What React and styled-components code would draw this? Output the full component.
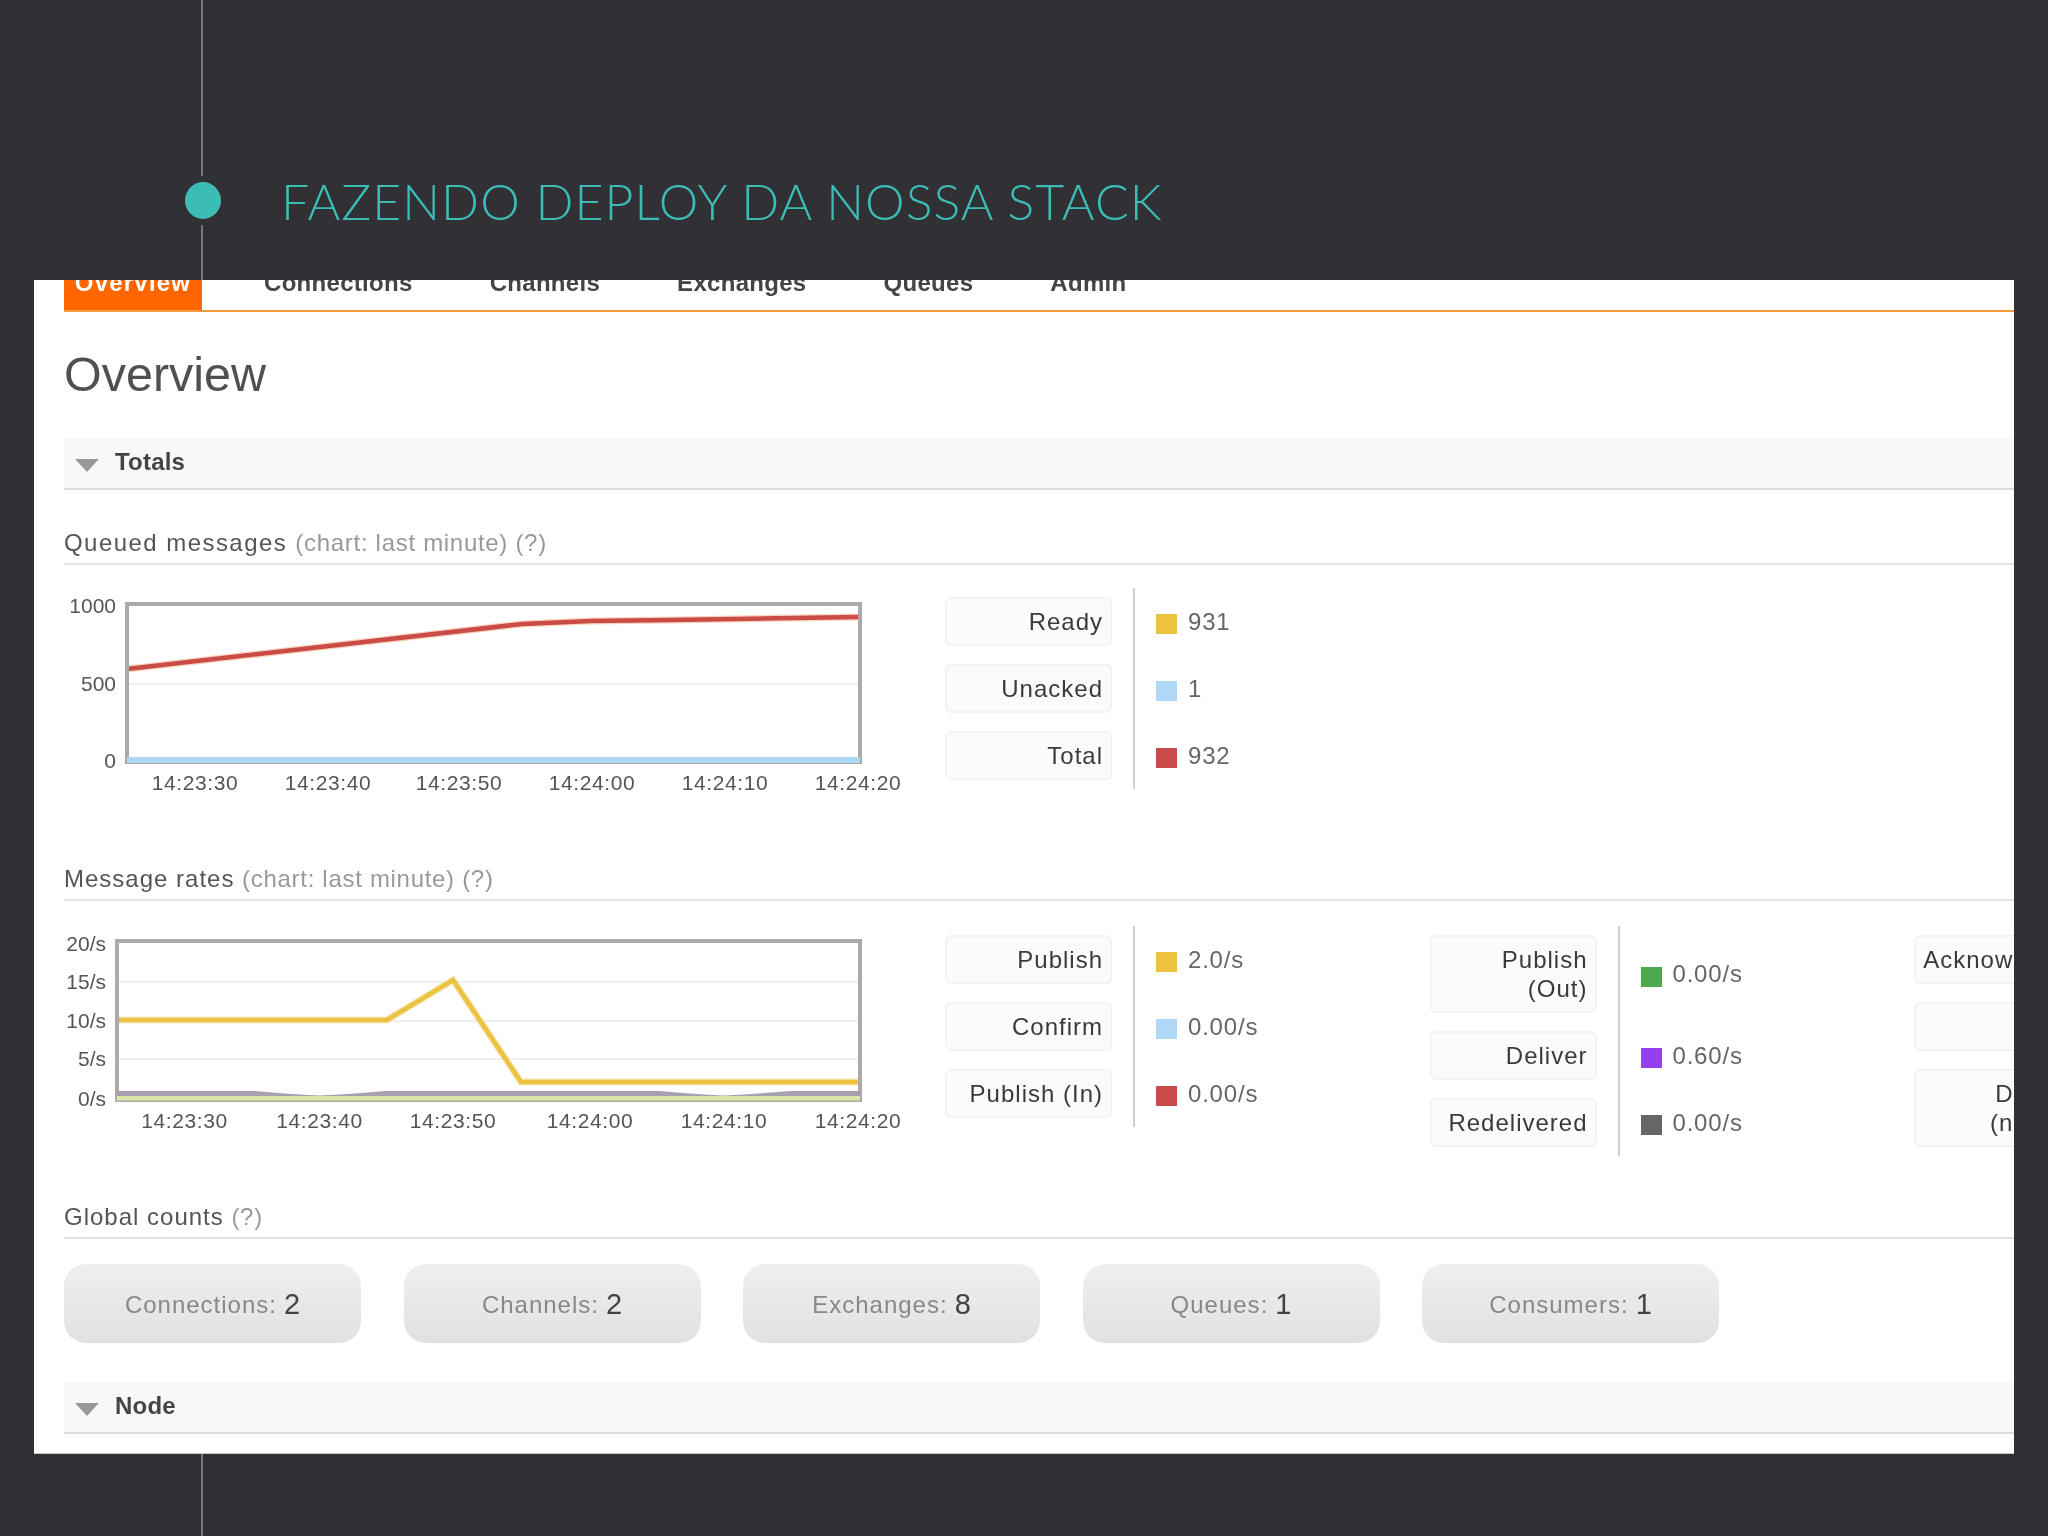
import styled, { createGlobalStyle } from "styled-components";

const GlobalStyle = createGlobalStyle`
  html, body {
    margin: 0;
    padding: 0;
    background: #303035;
  }
  * {
    box-sizing: border-box;
  }
`;

const Page = styled.div`
  position: relative;
  width: 2048px;
  height: 1536px;
  overflow: hidden;
  background: #303035;
  font-family: "Liberation Sans", Arial, sans-serif;
`;

const Rail = styled.div`
  position: absolute;
  left: 201px;
  top: 0;
  bottom: 0;
  width: 2px;
  background: #77777b;
`;

const Header = styled.header`
  position: relative;
  height: 280px;
  padding: 182px 0 0 185px;
  display: flex;
  align-items: flex-start;
  gap: 60px;
`;

const Dot = styled.div`
  width: 36px;
  height: 37px;
  border-radius: 50%;
  background: #3bbdb6;
  box-shadow: 0 0 0 6px #303035;
`;

const Title = styled.h1`
  margin: 1px 0 0;
  font-family: Lato, sans-serif;
  font-weight: 300;
  font-size: 50px;
  line-height: 37px;
  letter-spacing: 1.05px;
  white-space: nowrap;
  color: #3bbdb6;
`;

const Panel = styled.main`
  position: relative;
  margin-left: 34px;
  width: 1980px;
  height: 1174px;
  padding-left: 30px;
  overflow: hidden;
  background: #fff;
  border-bottom: 1px solid #c8c8c8;
  filter: blur(0.5px);
`;

const Tabs = styled.nav`
  display: flex;
  height: 32px;
  border-bottom: 2px solid #f59a3c;
`;

const Tab = styled.a`
  height: 30px;
  display: block;
  font-size: 24px;
  font-weight: bold;
  line-height: 6px;
  letter-spacing: ${(p) => (p.$active ? "1.2px" : "0.3px")};
  text-align: center;
  color: ${(p) => (p.$active ? "#fff" : "#444")};
  background: ${(p) => (p.$active ? "#ff6600" : "transparent")};
  width: ${(p) => (p.$active ? "138px" : "auto")};
  margin-right: ${(p) => (p.$active ? "23.5px" : "0")};
  padding: ${(p) => (p.$active ? "0" : "0 38.5px")};
`;

const Heading = styled.h2`
  margin: 34px 0 36px;
  font-size: 48.5px;
  font-weight: normal;
  line-height: 56px;
  color: #505050;
`;

const Bar = styled.div`
  height: 52px;
  display: flex;
  align-items: center;
  background: #f8f8f8;
  border-bottom: 2px solid #dcdcdc;
  padding-left: 11px;
  gap: 16px;
`;

const Arrow = styled.span`
  width: 0;
  height: 0;
  margin-top: 4px;
  border-left: 12px solid transparent;
  border-right: 12px solid transparent;
  border-top: 13px solid #999;
`;

const BarName = styled.span`
  margin-top: -2px;
  font-size: 24px;
  font-weight: bold;
  letter-spacing: 0.2px;
  color: #444;
`;

const SectionHead = styled.h3`
  margin: 37px 0 0;
  height: 38px;
  font-size: 24px;
  font-weight: normal;
  line-height: 31px;
  letter-spacing: ${(p) => p.$spacing || 1}px;
  color: #555;
  border-bottom: 2px solid #e2e2e2;
`;

const Hint = styled.span`
  letter-spacing: 0.7px;
  color: #999;
`;

const ChartRow = styled.section`
  display: flex;
  align-items: flex-start;
  height: ${(p) => p.$height}px;
  padding-top: ${(p) => p.$top}px;
  margin-bottom: -37px;
`;

const ChartSvg = styled.svg`
  flex: 0 0 881px;
  width: 881px;
  height: 230px;
  font-family: "Liberation Sans", Arial, sans-serif;
  font-size: 21px;
  fill: #555;
`;

const TimeLabel = styled.text`
  letter-spacing: 0.6px;
`;

const LegendGroup = styled.div`
  flex: 0 0 484.5px;
`;

const LegendRow = styled.div`
  display: flex;
`;

const LegendLabel = styled.div`
  flex: 0 0 167px;
  margin: 9px 21px 9px 0;
  padding: 8px ${(p) => p.$inset}px 8px 0;
  border: 2px solid #f3f3f5;
  border-radius: 6px;
  background: #fbfbfc;
  font-size: 24px;
  line-height: 29px;
  letter-spacing: 1px;
  text-align: right;
  white-space: nowrap;
  color: #3a3a3a;
  min-height: 49px;
`;

const LegendCell = styled.div`
  display: flex;
  align-items: center;
  gap: 11px;
  padding-left: 21px;
  border-left: 2px solid #cfcfcf;
`;

const Swatch = styled.span`
  width: 21px;
  height: 20px;
  margin-top: 5px;
  background: ${(p) => p.$color};
`;

const LegendValue = styled.span`
  font-size: 24px;
  letter-spacing: 0.8px;
  color: #666;
`;

const Counts = styled.div`
  display: flex;
  gap: 42.5px;
  margin: 25px 0 39px;
`;

const Count = styled.div`
  width: 297px;
  height: 79px;
  padding-top: 2px;
  display: flex;
  align-items: center;
  justify-content: center;
  gap: 7px;
  border-radius: 22px;
  background: linear-gradient(#efeef1, #e1e1e3);
  font-size: 24px;
  letter-spacing: 1px;
  color: #888;
`;

const CountValue = styled.span`
  font-size: 29px;
  letter-spacing: 0;
  color: #444;
`;

const tabs = ["Connections", "Channels", "Exchanges", "Queues", "Admin"];

const queued = [
  [["Ready"], "#edc240", "931"],
  [["Unacked"], "#afd8f8", "1"],
  [["Total"], "#cb4b4b", "932"],
];

const rateGroups = [
  [
    [["Publish"], "#edc240", "2.0/s"],
    [["Confirm"], "#afd8f8", "0.00/s"],
    [["Publish (In)"], "#cb4b4b", "0.00/s"],
  ],
  [
    [["Publish", "(Out)"], "#4da74d", "0.00/s"],
    [["Deliver"], "#9440ed", "0.60/s"],
    [["Redelivered"], "#666", "0.00/s"],
  ],
  [
    [["Acknowledge"], "#aaa", "0.00/s"],
    [["Get"], "#aaa", "0.00/s"],
    [["Deliver", "(noack)"], "#aaa", "0.00/s"],
  ],
];

const counts = [
  ["Connections", 2],
  ["Channels", 2],
  ["Exchanges", 8],
  ["Queues", 1],
  ["Consumers", 1],
];

const Legend = ({ rows, inset = 7 }) => (
  <LegendGroup>
    {rows.map(([lines, color, value]) => (
      <LegendRow key={lines[0]}>
        <LegendLabel $inset={inset}>
          {lines.map((line, i) => (
            <div key={i}>{line}</div>
          ))}
        </LegendLabel>
        <LegendCell>
          <Swatch $color={color} />
          <LegendValue>{value}</LegendValue>
        </LegendCell>
      </LegendRow>
    ))}
  </LegendGroup>
);

const timeLabels = ["14:23:30", "14:23:40", "14:23:50", "14:24:00", "14:24:10", "14:24:20"];

const QueuedChart = () => (
  <ChartSvg viewBox="64 588 881 230">
    <rect x="127" y="604" width="733" height="158" fill="#fff" />
    <line x1="127" y1="684" x2="860" y2="684" stroke="#f0f0f2" strokeWidth="2" />
    <polyline points="127,669 522,624 591,621 671,620 858,617" fill="none" stroke="#f0a070" strokeWidth="7" opacity="0.45" />
    <polyline points="127,669 522,624 591,621 671,620 858,617" fill="none" stroke="#cb4b47" strokeWidth="4.5" />
    <rect x="127" y="604" width="733" height="158" fill="none" stroke="#aaa" strokeWidth="4" />
    <rect x="127" y="757" width="733" height="6" fill="#aed8f5" />
    <text x="116" y="612.5" textAnchor="end">1000</text>
    <text x="116" y="690.5" textAnchor="end">500</text>
    <text x="116" y="768" textAnchor="end">0</text>
    {[195, 328, 459, 592, 725, 858].map((x, i) => (
      <TimeLabel key={x} x={x} y="789.5" textAnchor="middle">{timeLabels[i]}</TimeLabel>
    ))}
  </ChartSvg>
);

const RatesChart = () => (
  <ChartSvg viewBox="64 926 881 230">
    <rect x="117" y="941" width="743" height="159" fill="#fff" />
    {[982, 1021, 1059].map((y) => (
      <line key={y} x1="117" y1={y} x2="860" y2={y} stroke="#f0f0f2" strokeWidth="2" />
    ))}
    <polyline points="117,1020 387,1020 453,980 521,1082 860,1082" fill="none" stroke="#f0d98a" strokeWidth="7" opacity="0.6" />
    <polyline points="117,1020 387,1020 453,980 521,1082 860,1082" fill="none" stroke="#edc240" strokeWidth="4.5" />
    <rect x="117" y="941" width="743" height="159" fill="none" stroke="#aaa" strokeWidth="4" />
    <path
      d="M117 1091 H255 Q290 1094 319 1095.5 Q350 1094 385 1091 H660 Q695 1094 723 1095.5 Q755 1094 790 1091 H860 V1096 H117 Z"
      fill="#a89fb2"
    />
    <rect x="117" y="1096" width="743" height="4.5" fill="#e0e4a8" />
    <text x="106" y="950.5" textAnchor="end">20/s</text>
    <text x="106" y="988.5" textAnchor="end">15/s</text>
    <text x="106" y="1027.5" textAnchor="end">10/s</text>
    <text x="106" y="1066" textAnchor="end">5/s</text>
    <text x="106" y="1105.5" textAnchor="end">0/s</text>
    {[184.5, 319.5, 453, 590, 724, 858].map((x, i) => (
      <TimeLabel key={x} x={x} y="1127.5" textAnchor="middle">{timeLabels[i]}</TimeLabel>
    ))}
  </ChartSvg>
);

export default function App() {
  return (
    <Page>
      <GlobalStyle />
      <Rail />
      <Header>
        <Dot />
        <Title>FAZENDO DEPLOY DA NOSSA STACK</Title>
      </Header>
      <Panel>
        <Tabs>
          <Tab $active>Overview</Tab>
          {tabs.map((t) => (
            <Tab key={t}>{t}</Tab>
          ))}
        </Tabs>
        <Heading>Overview</Heading>
        <Bar>
          <Arrow />
          <BarName>Totals</BarName>
        </Bar>

        <SectionHead $spacing={1.45}>
          Queued messages <Hint>(chart: last minute) (?)</Hint>
        </SectionHead>
        <ChartRow $top={23} $height={298}>
          <QueuedChart />
          <Legend rows={queued} />
        </ChartRow>

        <SectionHead>
          Message rates <Hint>(chart: last minute) (?)</Hint>
        </SectionHead>
        <ChartRow $top={25} $height={300}>
          <RatesChart />
          <Legend rows={rateGroups[0]} />
          <Legend rows={rateGroups[1]} />
          <Legend rows={rateGroups[2]} inset={2} />
        </ChartRow>

        <SectionHead>
          Global counts <Hint>(?)</Hint>
        </SectionHead>
        <Counts>
          {counts.map(([name, n]) => (
            <Count key={name}>
              {name}: <CountValue>{n}</CountValue>
            </Count>
          ))}
        </Counts>
        <Bar>
          <Arrow />
          <BarName>Node</BarName>
        </Bar>
      </Panel>
    </Page>
  );
}
